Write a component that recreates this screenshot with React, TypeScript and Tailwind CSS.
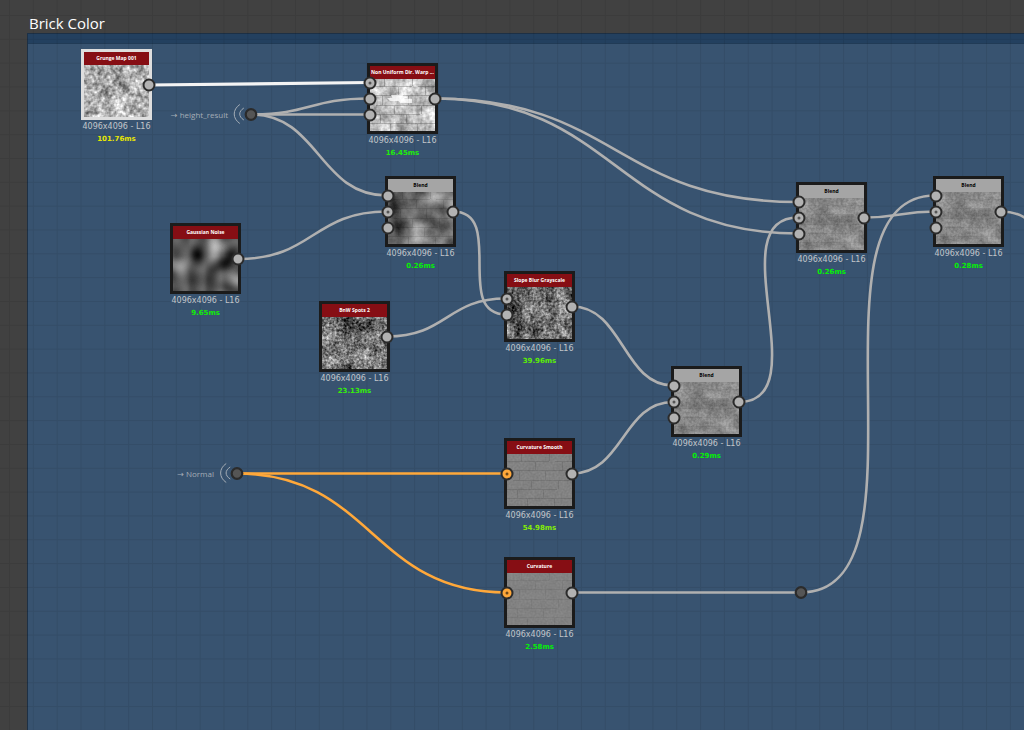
import React from "react";

type Texture = "grunge" | "warp" | "clouds" | "gaussian" | "spots" | "slope" | "concrete" | "bricks" | "flat";

type GraphNode = {
  id: string;
  name: string;
  x: number;
  y: number;
  time: string;
  timeClass: string;
  texture: Texture;
  inputs: { y: number; primary?: boolean; color?: boolean }[];
  atomic?: boolean;
  selected?: boolean;
};

const nodes: GraphNode[] = [
  { id: "grunge", name: "Grunge Map 001", x: 81, y: 49, time: "101.76ms", timeClass: "text-[#e8e800]", texture: "grunge", inputs: [], selected: true },
  { id: "warp", name: "Non Uniform Dir. Warp ...", x: 367, y: 63, time: "16.45ms", timeClass: "text-[#1fee0a]", texture: "warp", inputs: [{ y: 20, primary: true }, { y: 36 }, { y: 52 }] },
  { id: "blend1", name: "Blend", x: 385, y: 176, time: "0.26ms", timeClass: "text-[#05f005]", texture: "clouds", inputs: [{ y: 20 }, { y: 36, primary: true }, { y: 52 }], atomic: true },
  { id: "gaussian", name: "Gaussian Noise", x: 170, y: 223, time: "9.65ms", timeClass: "text-[#12ee05]", texture: "gaussian", inputs: [] },
  { id: "spots", name: "BnW Spots 2", x: 319, y: 301, time: "23.13ms", timeClass: "text-[#36ee0a]", texture: "spots", inputs: [] },
  { id: "slope", name: "Slope Blur Grayscale", x: 504, y: 271, time: "39.96ms", timeClass: "text-[#5cee05]", texture: "slope", inputs: [{ y: 28, primary: true }, { y: 44 }] },
  { id: "blend2", name: "Blend", x: 671, y: 366, time: "0.29ms", timeClass: "text-[#05f005]", texture: "concrete", inputs: [{ y: 20 }, { y: 36, primary: true }, { y: 52 }], atomic: true },
  { id: "blend3", name: "Blend", x: 796, y: 182, time: "0.26ms", timeClass: "text-[#05f005]", texture: "concrete", inputs: [{ y: 20 }, { y: 36, primary: true }, { y: 52 }], atomic: true },
  { id: "blend4", name: "Blend", x: 933, y: 176, time: "0.28ms", timeClass: "text-[#05f005]", texture: "concrete", inputs: [{ y: 20 }, { y: 36, primary: true }, { y: 52 }], atomic: true },
  { id: "smooth", name: "Curvature Smooth", x: 504, y: 438, time: "54.98ms", timeClass: "text-[#84ee05]", texture: "bricks", inputs: [{ y: 36, primary: true, color: true }] },
  { id: "curvature", name: "Curvature", x: 504, y: 557, time: "2.58ms", timeClass: "text-[#05f005]", texture: "flat", inputs: [{ y: 36, primary: true, color: true }] },
];

const portals = [
  { label: "→ height_result", x: 251, y: 114 },
  { label: "→ Normal", x: 237, y: 473 },
];

const wires = [
  "M251 114.5C310 114.5 310 98.5 369 98.5",
  "M251 114.5H369",
  "M251 114.5C319 114.5 319 195.5 387 195.5",
  "M239 259C313 259 313 211.5 387 211.5",
  "M387 336.5C447 336.5 447 298.5 506 298.5",
  "M453 211.5C506 211.5 453 314.5 506 314.5",
  "M435 98.5C616 98.5 616 202 798 202",
  "M435 98.5C616 98.5 616 233.5 798 233.5",
  "M572 306.5C623 306.5 623 385.5 673 385.5",
  "M572 473.5C623 473.5 623 402 673 402",
  "M739 402C819 402 718 217.5 798 217.5",
  "M864 217.5C900 217.5 900 211.5 935 211.5",
  "M572 592.5H801",
  "M801 592.5C939 592.5 797 195.5 935 195.5",
  "M1001 211.5C1025 211.5 1034 221 1058 260",
];

// each texture blends a coarse noise with a fine one
const noise: Record<Texture, { coarse: number; fine: number; mix: number; contrast: number; mean: number; seed: number }> = {
  grunge: { coarse: 0.07, fine: 0.28, mix: 0.5, contrast: 1.5, mean: 0.68, seed: 21 },
  warp: { coarse: 0.07, fine: 0.3, mix: 0.6, contrast: 1, mean: 0.76, seed: 12 },
  clouds: { coarse: 0.05, fine: 0.4, mix: 0.92, contrast: 1, mean: 0.43, seed: 33 },
  gaussian: { coarse: 0.06, fine: 0.06, mix: 1, contrast: 1.2, mean: 0.34, seed: 17 },
  spots: { coarse: 0.06, fine: 0.4, mix: 0.5, contrast: 1.7, mean: 0.43, seed: 23 },
  slope: { coarse: 0.06, fine: 0.38, mix: 0.5, contrast: 1.7, mean: 0.43, seed: 31 },
  concrete: { coarse: 0.06, fine: 0.4, mix: 0.65, contrast: 0.6, mean: 0.54, seed: 27 },
  bricks: { coarse: 0.1, fine: 0.5, mix: 0.3, contrast: 0.14, mean: 0.51, seed: 8 },
  flat: { coarse: 0.1, fine: 0.5, mix: 0.3, contrast: 0.12, mean: 0.51, seed: 5 },
};

const brickClass: Partial<Record<Texture, string>> = {
  warp: "opacity-20",
  clouds: "opacity-10",
  concrete: "opacity-5",
  bricks: "opacity-10",
  flat: "opacity-5",
};

const GRAY = "1 0 0 0 0 1 0 0 0 0 1 0 0 0 0 0 0 0 0 1";

function Thumbnail({ id, texture }: { id: string; texture: Texture }) {
  const { coarse, fine, mix, contrast, mean, seed } = noise[texture];
  const row = `${contrast} 0 0 0 ${mean - contrast / 2}`;
  return (
    <svg viewBox="0 0 65 52" className="block h-[52px] w-full" aria-hidden="true">
      <filter id={`tex-${id}`} x="0" y="0" width="100%" height="100%" colorInterpolationFilters="sRGB">
        <feTurbulence type="fractalNoise" baseFrequency={coarse} numOctaves={texture === "gaussian" ? 1 : 2} seed={seed} />
        <feColorMatrix values={GRAY} result="coarse" />
        <feTurbulence type="fractalNoise" baseFrequency={fine} numOctaves="2" seed={seed + 1} />
        <feColorMatrix values={GRAY} result="fine" />
        <feComposite in="coarse" in2="fine" operator="arithmetic" k1="0" k2={mix} k3={1 - mix} k4="0" />
        <feColorMatrix values={`${row} ${row} ${row} 0 0 0 0 1`} />
      </filter>
      <rect width="65" height="52" filter={`url(#tex-${id})`} />
      {brickClass[texture] && (
        <g stroke="#000" strokeWidth="1" fill="none" className={brickClass[texture]}>
          <path d="M0 7.5H42M48 7.5H65M0 16.5H65M6 26.5H65M0 35.5H50M0 44.5H65" />
          <path d="M14.5 0V7M42.5 0V7M28.5 8V16M55.5 8V16M12.5 17V26M38.5 17V26M24.5 27V35M51.5 27V35M10.5 36V44M36.5 36V44M20.5 45V52M47.5 45V52" />
        </g>
      )}
      {texture === "warp" && (
        <path d="M17 19h10v3h-7zM21 16h12v6h-9zM28 20h14v4H30z" fill="#fff" opacity="0.75" />
      )}
    </svg>
  );
}

function Port({ left, top, primary, color }: { left: number; top: number; primary?: boolean; color?: boolean }) {
  return (
    <span
      className={`absolute flex size-[13px] -translate-x-1/2 -translate-y-1/2 items-center justify-center rounded-full border-2 border-[#2b2b2b] ${color ? "bg-[#ffa83a]" : "bg-[#b2b2b2]"}`}
      style={{ left, top }}
    >
      {primary && <span className={`size-[3px] rounded-full ${color ? "bg-[#70491a]" : "bg-[#555]"}`} />}
    </span>
  );
}

function NodeCard({ node }: { node: GraphNode }) {
  return (
    <article className="absolute w-[71px]" style={{ left: node.x, top: node.y }}>
      <div className={`h-[71px] overflow-hidden border-3 ${node.selected ? "border-[#dedede]" : "border-[#1b1b1b]"}`}>
        <h2
          className={`flex h-[13px] items-center justify-center font-['Open_Sans',sans-serif] text-[5px] font-bold whitespace-nowrap ${node.atomic ? "bg-[#a5a5a5] text-black" : "bg-[#860e14] text-white"}`}
        >
          {node.name}
        </h2>
        <Thumbnail id={node.id} texture={node.texture} />
      </div>
      <div className="flex flex-col items-center font-['DejaVu_Sans',sans-serif] whitespace-nowrap">
        <p className="text-[8px] leading-[13px] text-[#c2c6ca]">4096x4096 - L16</p>
        <p className={`text-[7px] leading-3 font-bold ${node.timeClass}`}>{node.time}</p>
      </div>
      {node.inputs.map((input) => (
        <Port key={input.y} left={3} top={input.y} primary={input.primary} color={input.color} />
      ))}
      <Port left={68} top={36} />
    </article>
  );
}

function Dot({ x, y }: { x: number; y: number }) {
  return <circle cx={x} cy={y} r="5.3" fill="#555" stroke="#2b2b2b" strokeWidth="2.2" />;
}

export default function App() {
  return (
    <main className="relative flex h-screen w-full flex-col overflow-hidden bg-[#414141] pl-[27px]">
      <h1 className="pt-[13px] pl-[2px] font-['Open_Sans',sans-serif] text-[15px] leading-5 text-white">Brick Color</h1>
      <section className="flex grow flex-col border-t border-l border-[#1d3045] bg-[#385370]">
        <div className="h-[10px] border-b border-[#213b56] bg-[#23405f]" />
      </section>

      <svg className="absolute inset-0 size-full" aria-hidden="true">
        <defs>
          <pattern id="grid" x="9" y="15" width="23.83" height="23.83" patternUnits="userSpaceOnUse">
            <path d="M0 0.5H23.83M0.5 0V23.83" stroke="#000" strokeOpacity="0.08" />
          </pattern>
        </defs>
        <rect width="100%" height="100%" fill="url(#grid)" />
        <g fill="none" strokeWidth="2.6" stroke="#b0b0b0">
          {wires.map((d) => (
            <path key={d} d={d} />
          ))}
          <path d="M149 85L369 82.5" stroke="#f4f4f4" strokeWidth="3.2" />
          <path d="M237 473.5H506" stroke="#ffa83a" />
          <path d="M237 473.5C372 473.5 372 592.5 506 592.5" stroke="#ffa83a" />
        </g>
        <Dot x={251} y={114.5} />
        <Dot x={237} y={473.5} />
        <Dot x={801} y={592.5} />
      </svg>

      {portals.map((portal) => (
        <div
          key={portal.label}
          className="absolute flex -translate-x-full -translate-y-1/2 items-center gap-[5px] pr-[6px] font-['Open_Sans','DejaVu_Sans',sans-serif] text-[8px] leading-3 whitespace-nowrap text-[#a4adb6]"
          style={{ left: portal.x, top: portal.y }}
        >
          <span>{portal.label}</span>
          <svg width="12" height="21" viewBox="0 0 12 21" fill="none" stroke="currentColor" aria-hidden="true">
            <path d="M7 1C-0.5 6 -0.5 15 7 20M11 4.5C5.5 8 5.5 13 11 16.5" />
          </svg>
        </div>
      ))}

      {nodes.map((node) => (
        <NodeCard key={node.id} node={node} />
      ))}
    </main>
  );
}
